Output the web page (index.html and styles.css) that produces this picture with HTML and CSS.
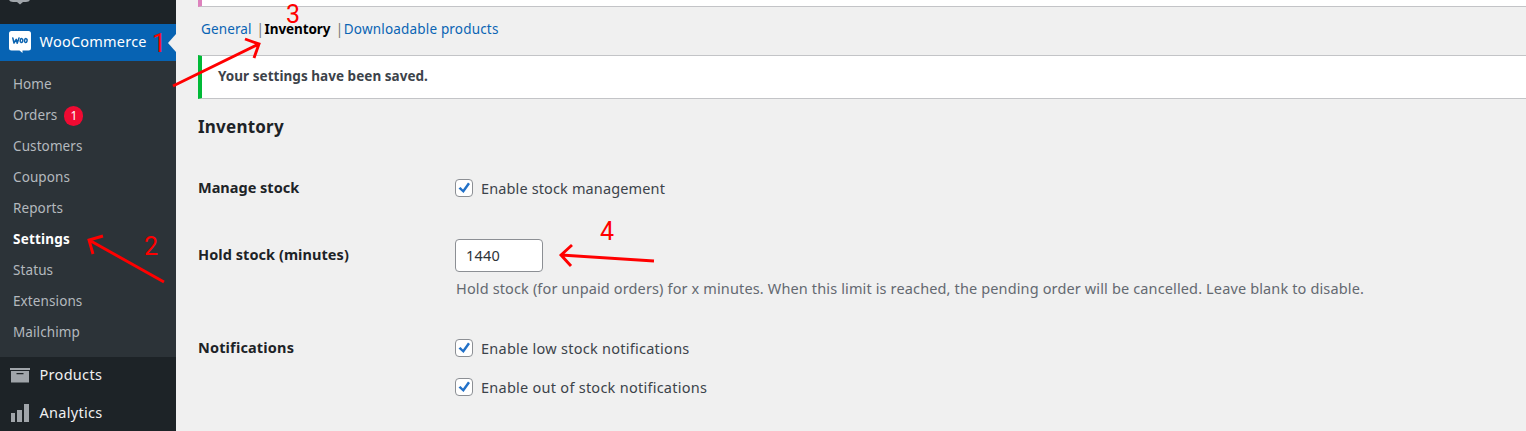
FILE: index.html
```html
<!DOCTYPE html>
<html lang="en">
<head>
<meta charset="utf-8">
<title>WooCommerce settings</title>
<link rel="stylesheet" href="styles.css">
</head>
<body>
<div class="app">
  <nav class="sidebar">
    <div class="previous-item">
      <svg width="22" height="5" viewBox="0 0 22 5"><path d="M0 0H21Q20 2 17 2H14L11 4.500 8 2H4Q1 2 0 0Z" fill="#a0a5aa"/></svg>
    </div>
    <a class="menu-item current">
      <svg class="menu-icon" width="22" height="23" viewBox="0 0 22 23"><path d="M2.500 0H19.500Q22 0 22 2.500V17Q22 19.500 19.500 19.500H13.500V22L10.500 19.500H2.500Q0 19.500 0 17V2.500Q0 0 2.500 0Z" fill="#fff"/><g fill="none" stroke="#0a63b0" stroke-width="1.500" stroke-linejoin="round" stroke-linecap="round"><path d="M3.800 7L5 12 7.200 8.300 8.200 12.200 10 7"/><ellipse cx="12.500" cy="9.600" rx="1.300" ry="2" transform="rotate(12 12.500 9.600)"/><ellipse cx="16.800" cy="9.600" rx="1.300" ry="2" transform="rotate(12 16.800 9.600)"/></g></svg>
      <span class="t-woo">WooCommerce</span>
    </a>
    <div class="submenu">
      <a>Home</a>
      <a>Orders<span class="count">1</span></a>
      <a>Customers</a>
      <a>Coupons</a>
      <a>Reports</a>
      <a class="selected">Settings</a>
      <a>Status</a>
      <a>Extensions</a>
      <a>Mailchimp</a>
    </div>
    <a class="menu-item products">
      <svg class="menu-icon" width="22" height="20" viewBox="0 0 22 20"><path d="M1 3H21V5H1ZM2 6H20V17.500H2ZM7.500 8V9.200H14.500V8Z" fill="#a0a5aa" fill-rule="evenodd"/></svg>
      <span class="t-products">Products</span>
    </a>
    <a class="menu-item analytics">
      <svg class="menu-icon" width="22" height="20" viewBox="0 0 22 20"><path d="M2 10H6V19H2ZM8 7H13V19H8ZM15 1H20V19H15Z" fill="#a0a5aa"/></svg>
      <span class="t-analytics">Analytics</span>
    </a>
  </nav>
  <main class="content">
    <div class="notice-tail"></div>
    <div class="tabs"><a class="t-general">General</a><i>|</i><b>Inventory</b><i class="second">|</i><a class="t-download">Downloadable products</a></div>
    <div class="notice"><span>Your settings have been saved.</span></div>
    <h2><span>Inventory</span></h2>
    <div class="form">
      <div class="row">
        <div class="label"><span class="t-manage">Manage stock</span></div>
        <label class="check"><span class="box"><svg width="16" height="16" viewBox="0 0 16 16"><path d="M2.500 8.500L4.500 7 7 9.500 12 2.500 14 4 7.500 13Z" fill="#2271c8"/></svg></span><span class="t-enable">Enable stock management</span></label>
      </div>
      <div class="row hold">
        <div class="label"><span class="t-hold">Hold stock (minutes)</span></div>
        <div>
          <div class="field"><span>1440</span></div>
          <p><span class="t-desc">Hold stock (for unpaid orders) for x minutes. When this limit is reached, the pending order will be cancelled. Leave blank to disable.</span></p>
        </div>
      </div>
      <div class="row notifications">
        <div class="label"><span class="t-notif">Notifications</span></div>
        <div class="checks">
          <label class="check"><span class="box"><svg width="16" height="16" viewBox="0 0 16 16"><path d="M2.500 8.500L4.500 7 7 9.500 12 2.500 14 4 7.500 13Z" fill="#2271c8"/></svg></span><span class="t-low">Enable low stock notifications</span></label>
          <label class="check"><span class="box"><svg width="16" height="16" viewBox="0 0 16 16"><path d="M2.500 8.500L4.500 7 7 9.500 12 2.500 14 4 7.500 13Z" fill="#2271c8"/></svg></span><span class="t-out">Enable out of stock notifications</span></label>
        </div>
      </div>
    </div>
  </main>
  <svg class="annotations" width="1526" height="431" viewBox="0 0 1526 431">
    <g fill="none" stroke="#f00" stroke-width="2.900">
      <path d="M173 86L259 44M245 39L259 44 254 58"/>
      <path d="M164 282L89 240M103 236L89 240 93 254"/>
      <path d="M654 261L561 255M572 245L561 255 571 266"/>
    </g>
    <g class="numbers"><text x="152" y="52">1</text><text x="144" y="255">2</text><text x="286" y="23">3</text><text x="600" y="240">4</text></g>
  </svg>
</div>
</body>
</html>
```
FILE: styles.css
```css
* { box-sizing: border-box; }
body { margin: 0; overflow: hidden; font-family: "Noto Sans", "Open Sans", sans-serif; color: #3c434a; background: #f0f0f0; }
.app { position: relative; display: flex; width: 1526px; height: 431px; overflow: hidden; white-space: nowrap; }
.sidebar { flex: 0 0 176px; background: #1d2327; }
.previous-item { height: 24px; padding-left: 9px; }
.previous-item svg { display: block; }
.menu-item { display: flex; align-items: center; height: 37px; padding-left: 9px; gap: 8.500px; color: #f0f0f1; font-size: 14.500px; letter-spacing: .3px; }
.menu-icon { flex: none; }
.menu-item span { padding-bottom: 2px; }
.current { position: relative; color: #fff; background: #0763b3; letter-spacing: .22px; }
.current .t-woo { padding-bottom: 3px; }
.current::after { content: ""; position: absolute; right: 0; top: 10px; border: solid transparent; border-width: 9px 8px 9px 0; border-right-color: #f0f0f0; }
.submenu { height: 296px; padding-top: 7px; background: #2c3338; font-size: 13.500px; letter-spacing: .1px; color: #b4b9be; }
.submenu a { display: flex; align-items: center; height: 31px; padding-left: 13px; }
.submenu .selected { color: #fff; font-weight: 700; letter-spacing: .2px; }
.count { width: 19px; height: 20px; margin: 2px 0 0 7px; border-radius: 10px; background: #f00a32; color: #fff; font-size: 12px; line-height: 20px; text-align: center; }
.products { padding-bottom: 1px; }
.content { flex: 1; padding-left: 22px; }
.notice-tail { height: 7px; background: #fff; border-left: 4px solid #dd82bd; border-bottom: 1px solid #c3c4c7; }
.tabs { display: flex; height: 48px; padding-left: 3px; line-height: 44px; font-size: 13.500px; color: #0a64b4; }
.tabs i { width: 8px; font-style: normal; color: #777; margin-left: 5px; }
.tabs .second { margin-left: 5.500px; }
.tabs b { color: #000; letter-spacing: -.1px; }
.t-general { letter-spacing: .12px; }
.t-download { letter-spacing: .18px; }
.notice { display: flex; align-items: center; height: 44px; padding: 0 0 3px 16px; background: #fff; border: 1px solid #c3c4c7; border-left: 4px solid #00ba37; border-right: 0; font-size: 13.500px; font-weight: 700; letter-spacing: .04px; }
h2 { margin: 0; height: 56px; padding-top: 16px; font-size: 17px; line-height: 24px; letter-spacing: .22px; color: #1d2327; }
.row { display: grid; grid-template-columns: 257px 1fr; font-size: 14.500px; }
.form { padding-top: 22px; }
.label { font-weight: 700; color: #1d2327; line-height: 20px; }
.check { display: flex; align-items: center; height: 22px; gap: 8px; }
.box { display: block; width: 18px; height: 18px; border: 1px solid #8c8f94; border-radius: 4px; background: #fff; }
.box svg { display: block; }
.hold { padding-top: 40px; height: 138px; }
.hold .label { padding-top: 5px; }
.field { width: 88px; height: 33px; padding-left: 10px; border: 1px solid #8c8f94; border-radius: 4px; background: #fff; color: #2c3338; line-height: 31px; letter-spacing: .2px; }
p { margin: 4px 0 0 1px; line-height: 24px; color: #646970; }
.checks { display: grid; row-gap: 17px; align-content: start; }
.t-enable { letter-spacing: .13px; }
.t-hold { letter-spacing: .06px; }
.t-desc { letter-spacing: .137px; }
.t-notif { letter-spacing: .16px; }
.t-low, .t-out { letter-spacing: .26px; }
.annotations { position: absolute; left: 0; top: 0; }
.numbers { font: 25px Roboto, sans-serif; fill: #f00; }
```
